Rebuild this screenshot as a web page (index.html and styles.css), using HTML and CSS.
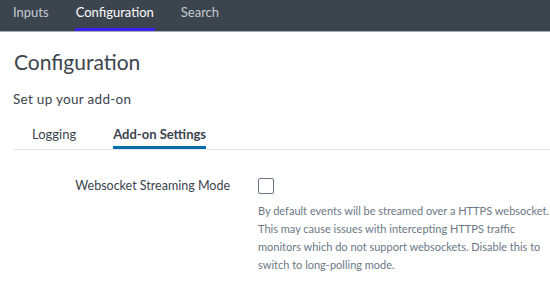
FILE: index.html
```html
<!DOCTYPE html>
<html lang="en">
<head>
  <meta charset="UTF-8" />
  <title>Configuration</title>
  <link rel="stylesheet" href="styles.css">
</head>
<body>
  <header class="appbar">
    <nav>
      <a href="#">Inputs</a><a href="#" class="active">Configuration</a><a href="#">Search</a>
    </nav>
  </header>

  <main class="page">
    <h1>Configuration</h1>
    <p class="subtitle">Set up your add-on</p>

    <div class="tabs">
      <a href="#">Logging</a><a href="#" class="active">Add-on Settings</a>
    </div>

    <div class="field">
      <label class="field-label" for="ws">Websocket Streaming Mode</label>
      <div class="field-control">
        <span class="checkbox" id="ws"></span>
        <p class="help">By default events will be streamed over a HTTPS websocket. This may cause issues with intercepting HTTPS traffic monitors which do not support websockets. Disable this to switch to long-polling mode.</p>
      </div>
    </div>
  </main>
</body>
</html>
```

FILE: styles.css
```css
body { font-family: Lato, "Open Sans", sans-serif; margin:0; background:#fff; color:#3c444d; }
.appbar { background:#3c444d; height:31px; border-bottom:1px solid #a5acb3; }
.appbar nav { display:flex; gap:27px; padding-left:13px; height:100%; }
.appbar nav a { color:#c3cbd4; text-decoration:none; font-size:13px; display:flex; align-items:center; height:23px; padding:0 0 8px; }
.appbar nav a.active { color:#fff; border-bottom:3px solid #3d20f5; padding:0 1px 5px; margin:0 -1px; }
.page { padding:0 0 0 14px; }
h1 { font-size:21px; font-weight:400; margin:17px 0 0; line-height:26px; }
.subtitle { font-size:13.5px; letter-spacing:.3px; margin:16px 0 0 -1px; line-height:16px; }
.tabs { display:flex; gap:37px; padding-left:18px; margin-top:17px; border-bottom:1px solid #e1e6eb; }
.tabs a { color:#3c444d; text-decoration:none; font-size:13px; line-height:16px; padding:2px 0 7px; }
.tabs a.active { font-weight:bold; padding-bottom:4px; border-bottom:3px solid #006eaa; }
.field { display:flex; margin-top:28px; }
.field-label { flex:none; width:216px; text-align:right; font-size:12.5px; line-height:16px; }
.field-control { margin-left:28px; }
.checkbox { display:block; width:14px; height:14px; border:1px solid #6b7785; border-radius:2px; }
.help { margin:8px 0 0; width:292px; font-size:11px; line-height:18px; color:#6b7785; }
```
